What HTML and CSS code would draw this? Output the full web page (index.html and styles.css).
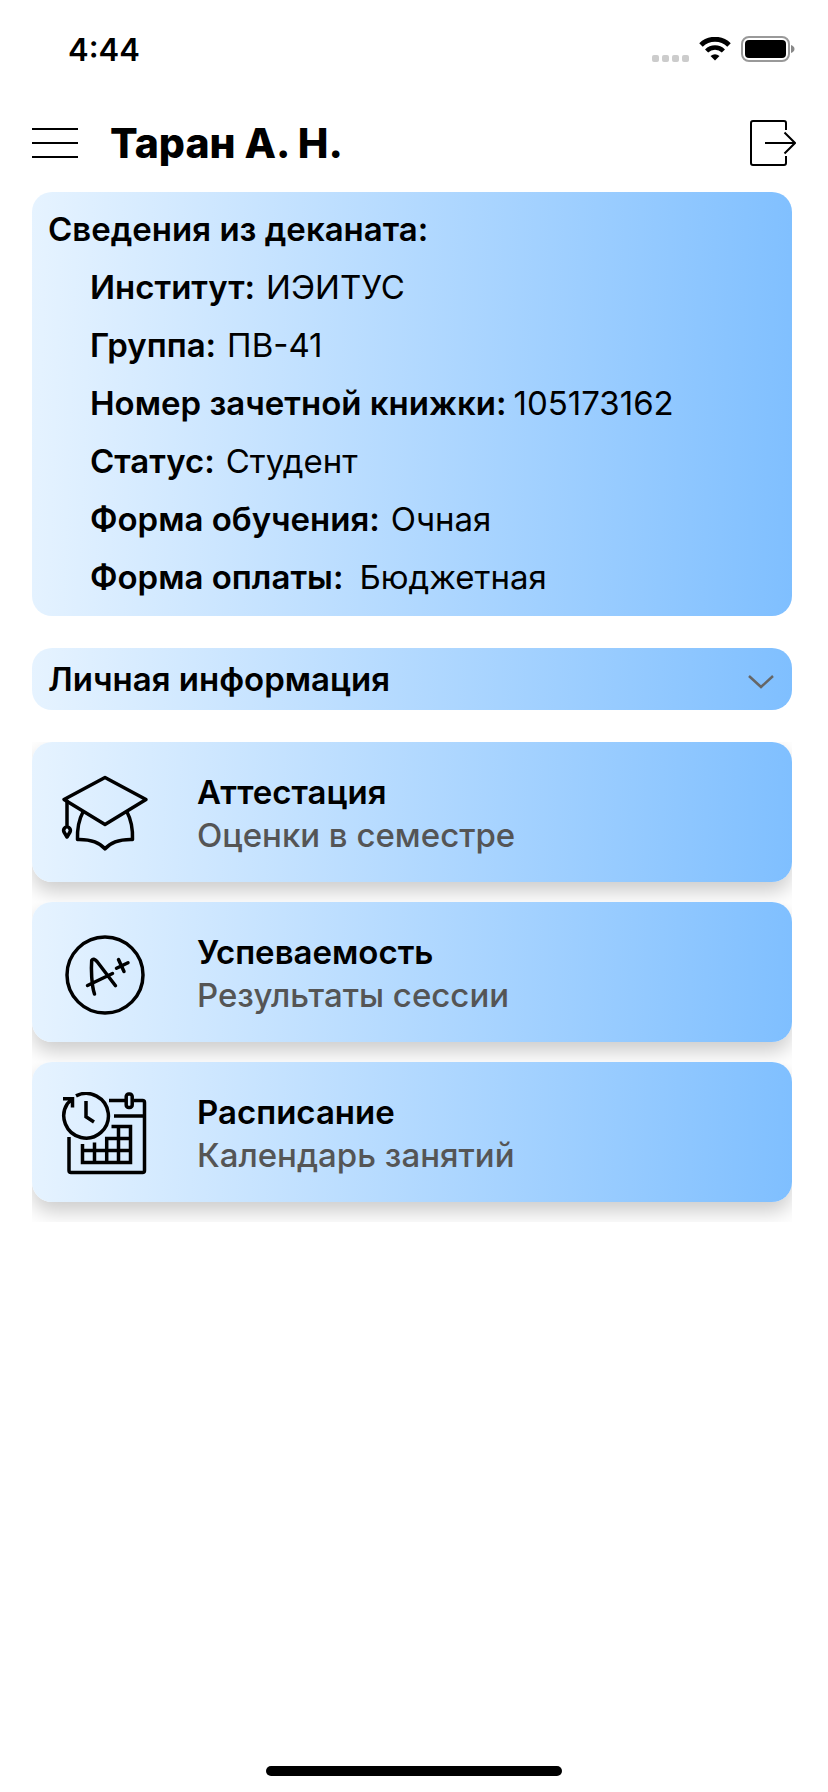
FILE: index.html
```html
<!DOCTYPE html>
<html lang="ru">
<head>
<meta charset="utf-8">
<meta name="viewport" content="width=device-width, initial-scale=1">
<title>Таран А. Н.</title>
<link rel="stylesheet" href="styles.css">
</head>
<body>
<div class="screen">
  <div class="status-bar">
    <span class="status-time">4:44</span>
    <div class="status-icons">
      <span class="signal"><i></i><i></i><i></i><i></i></span>
      <svg class="wifi" viewBox="0 0 32 24" aria-hidden="true">
        <path d="M2 8 A20 20 0 0 1 30 8" fill="none" stroke="#000" stroke-width="5"/>
        <path d="M7.600 14 A12 12 0 0 1 24.400 14" fill="none" stroke="#000" stroke-width="4.500"/>
        <path d="M11.500 19 Q16 15.500 20.500 19 L16 23.500 Z"/>
      </svg>
      <svg class="battery" viewBox="0 0 54 26" aria-hidden="true">
        <rect x="1" y="1" width="47" height="24" rx="7" fill="none" stroke="#999" stroke-width="2"/>
        <rect x="4" y="4" width="41" height="18" rx="4"/>
        <path d="M50 9 Q53.500 10.500 53.500 13 T50 17 Z" fill="#888"/>
      </svg>
    </div>
  </div>

  <header class="top-bar">
    <button class="icon-button" type="button" aria-label="Меню">
      <svg class="menu-icon" viewBox="0 0 46 46" aria-hidden="true">
        <path d="M0 9H46M0 23H46M0 37H46" stroke="#000" stroke-width="2"/>
      </svg>
    </button>
    <h1 class="page-title">Таран А. Н.</h1>
    <button class="icon-button" type="button" aria-label="Выйти">
      <svg class="exit-icon" viewBox="0 0 46 46" aria-hidden="true">
        <path d="M36 10V3Q36 1 34 1H3Q1 1 1 3V43Q1 45 3 45H34Q36 45 36 43V36M15 23H45M34.500 12.500L45 23L34.500 33.500" fill="none" stroke="#000" stroke-width="2"/>
      </svg>
    </button>
  </header>

  <main class="content">
    <section class="panel info">
      <h2 class="info-title">Сведения из деканата:</h2>
      <dl class="info-list">
        <div class="info-row"><dt>Институт:</dt><dd>ИЭИТУС</dd></div>
        <div class="info-row"><dt>Группа:</dt><dd>ПВ-41</dd></div>
        <div class="info-row info-row-tight"><dt>Номер зачетной книжки:</dt><dd>105173162</dd></div>
        <div class="info-row"><dt>Статус:</dt><dd>Студент</dd></div>
        <div class="info-row"><dt>Форма обучения:</dt><dd>Очная</dd></div>
        <div class="info-row info-row-wide"><dt>Форма оплаты:</dt><dd>Бюджетная</dd></div>
      </dl>
    </section>

    <button class="panel disclosure" type="button" aria-expanded="false">
      <span>Личная информация</span>
      <svg class="chevron" viewBox="0 0 26 14" aria-hidden="true">
        <path d="M1 1L13 12L25 1" fill="none" stroke="#666" stroke-width="2.500"/>
      </svg>
    </button>

    <nav class="menu">
      <div class="menu-item">
        <a class="panel card" href="#attestation">
          <svg class="card-icon" viewBox="0 0 88 88" aria-hidden="true">
            <g class="line">
              <path d="M3 27.500L44 5.500L85 27.500L44 52.500Z"/>
              <path d="M6 29V54M6 54.500Q1.500 56.500 3 60L6 65L9 60Q10.500 56.500 6 54.500Z"/>
              <path d="M22 40Q16 51 16.500 67.500Q36 67 44 77Q52 67 71.500 67.500Q72 51 66 40"/>
            </g>
          </svg>
          <span class="card-text"><strong>Аттестация</strong><span class="card-note">Оценки в семестре</span></span>
        </a>
      </div>
      <div class="menu-item">
        <a class="panel card" href="#progress">
          <svg class="card-icon" viewBox="0 0 88 88" aria-hidden="true">
            <g class="line">
              <circle cx="44" cy="43" r="38"/>
              <path d="M33.500 62C30.500 53 30 37 30.700 28.500Q32.500 25.500 36 29.500L54.500 53.700M26.500 53.500L51.500 41.500M57.500 27.500L63 39.500M55.500 36.300L67 30.700"/>
            </g>
          </svg>
          <span class="card-text"><strong>Успеваемость</strong><span class="card-note">Результаты сессии</span></span>
        </a>
      </div>
      <div class="menu-item">
        <a class="panel card" href="#schedule">
          <svg class="card-icon" viewBox="0 0 88 88" aria-hidden="true">
            <g class="line line-square">
              <path d="M15 3.900A22.300 22.300 0 1 1 6.500 11.500L11 7M2 6.700H11.500V15.500M25 9V24.700L33 30"/>
              <path d="M48 8.500H64M73 8.500H81.500Q83.500 8.500 83.500 10.500V78.500Q83.500 80.500 81.500 80.500H10Q8 80.500 8 78.500V45M53 24H83"/>
              <rect x="65.200" y="2" width="6" height="13.500" rx="2.500"/>
              <path d="M50.500 34.500H69.500V70.500H21.500V52M57.500 35V70M33.500 50.500V70M45.700 70V46.400H69M22 58.400H69"/>
            </g>
          </svg>
          <span class="card-text"><strong>Расписание</strong><span class="card-note">Календарь занятий</span></span>
        </a>
      </div>
    </nav>
  </main>

  <div class="home-indicator"></div>
</div>
</body>
</html>
```
FILE: styles.css
```css
* {
  box-sizing: border-box;
}

body {
  margin: 0;
  background: #fff;
  color: #000;
  font-family: Inter, "Liberation Sans", sans-serif;
  font-size: 33px;
}

button {
  border: 0;
  padding: 0;
  background: none;
  color: inherit;
  font: inherit;
}

svg {
  display: block;
}

.screen {
  display: flex;
  flex-direction: column;
  min-height: 100vh;
}

.status-bar {
  display: flex;
  align-items: center;
  justify-content: space-between;
  height: 98px;
  padding: 0 33px 0 68px;
}

.status-time {
  font-size: 31px;
  font-weight: 600;
}

.status-icons {
  display: flex;
  align-items: center;
  gap: 10px;
}

.signal {
  display: flex;
  align-self: flex-end;
  gap: 3px;
}

.signal i {
  width: 7px;
  height: 7px;
  border-radius: 2px;
  background: #ccc;
}

.wifi {
  width: 32px;
  height: 24px;
}

.battery {
  width: 54px;
  height: 26px;
}

.top-bar {
  display: flex;
  align-items: center;
  gap: 32px;
  height: 94px;
  padding: 0 32px 4px;
}

.menu-icon,
.exit-icon {
  width: 46px;
  height: 46px;
}

.page-title {
  flex: 1;
  margin: 0;
  font-size: 41px;
  font-weight: 800;
}

.content {
  display: flex;
  flex-direction: column;
  gap: 32px;
  padding: 0 36px 0 32px;
}

.panel {
  border-radius: 20px;
  background: linear-gradient(92deg, #e6f3ff, #7fbfff);
}

.info {
  padding: 8px 16px 10px;
  line-height: 58px;
}

.info-title {
  margin: 0;
  font-size: 33px;
  font-weight: 600;
}

.info-list {
  margin: 0;
  padding-left: 42px;
}

.info-row {
  display: flex;
  gap: 11px;
}

.info-row-tight {
  gap: 7px;
}

.info-row-wide {
  gap: 16px;
}

.info-row dt {
  font-weight: 600;
}

.info-row dd {
  margin: 0;
  font-weight: 400;
}

.disclosure {
  display: flex;
  align-items: center;
  justify-content: space-between;
  height: 62px;
  padding: 0 18px 0 16px;
  font-weight: 600;
}

.chevron {
  width: 26px;
  height: 14px;
  margin-top: 6px;
}

.menu-item {
  overflow: hidden;
  padding-bottom: 20px;
}

.card {
  display: flex;
  align-items: center;
  gap: 48px;
  height: 140px;
  padding: 0 29px;
  box-shadow: 0 10px 20px rgba(0, 0, 0, 0.2);
  color: inherit;
  text-decoration: none;
}

.card-icon {
  width: 88px;
  height: 88px;
  margin-top: 8px;
}

.line {
  fill: none;
  stroke: #000;
  stroke-width: 3.5;
  stroke-linecap: round;
  stroke-linejoin: round;
}

.line-square {
  stroke-linecap: butt;
  stroke-linejoin: miter;
}

.card-text {
  display: flex;
  flex-direction: column;
  padding-top: 4px;
  line-height: 43px;
}

.card-text strong {
  font-weight: 600;
}

.card-note {
  color: #555;
  font-weight: 500;
}

.home-indicator {
  width: 296px;
  height: 10px;
  margin: auto auto 16px;
  border-radius: 5px;
  background: #000;
}
```
